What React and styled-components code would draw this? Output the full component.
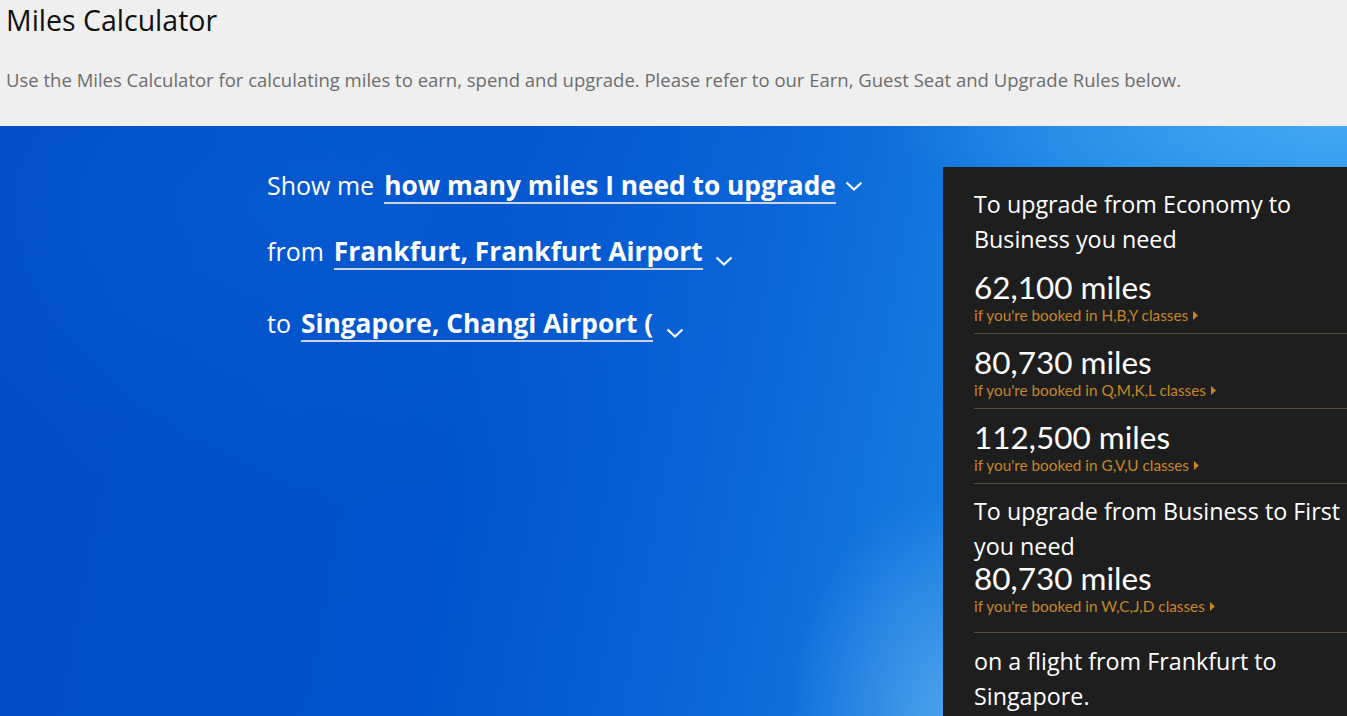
import styled, { createGlobalStyle } from "styled-components";

const GlobalStyle = createGlobalStyle`
  html, body {
    margin: 0;
    padding: 0;
    overflow: hidden;
  }
  body {
    font-family: "Open Sans", Lato, sans-serif;
  }
`;

const Page = styled.div`
  height: 100vh;
  display: flex;
  flex-direction: column;
  overflow: hidden;
`;

const Intro = styled.header`
  flex: none;
  background: #efefef;
  height: 126px;
  padding: 2px 6px 0;
  box-sizing: border-box;
`;

const Title = styled.h1`
  margin: 0;
  font-size: 28.5px;
  font-weight: 400;
  line-height: 36px;
  color: #111;
`;

const Lead = styled.p`
  margin: 30px 0 0;
  font-size: 18.5px;
  line-height: 24px;
  color: #6d6d6d;
`;

const Hero = styled.section`
  flex: 1;
  min-height: 0;
  display: flex;
  align-items: flex-start;
  padding-left: 267px;
  background:
    radial-gradient(ellipse 460px 110px at 100% 0%, rgba(70, 170, 245, 0.9), rgba(70, 170, 245, 0) 100%),
    radial-gradient(ellipse 160px 220px at 950px 100%, rgba(120, 190, 245, 0.55), rgba(120, 190, 245, 0) 100%),
    radial-gradient(ellipse 500px 300px at 300px 80px, rgba(20, 110, 220, 0.3), rgba(20, 110, 220, 0) 100%),
    linear-gradient(100deg, #004cc6 0%, #0052cc 35%, #0b66d8 55%, #1a82e2 75%, #2a95ec 100%);
`;

const Form = styled.div`
  flex: 1;
  display: flex;
  flex-direction: column;
  padding-top: 42px;
  gap: 22px;
  color: #fff;
`;

const Line = styled.div`
  display: flex;
  align-items: flex-start;
  height: ${(p) => p.$h}px;
  font-size: 25px;
`;

const Label = styled.span`
  line-height: 34px;
  margin-right: ${(p) => p.$gap}px;
`;

const Choice = styled.span`
  font-weight: 700;
  font-size: 26.3px;
  line-height: 34px;
  border-bottom: 2px solid #cfd3dc;
  white-space: nowrap;
`;

const Caret = styled.svg`
  width: 18px;
  height: 10px;
  margin-left: ${(p) => p.$left}px;
  margin-top: ${(p) => p.$top}px;
  flex: none;
`;

const Result = styled.aside`
  width: 404px;
  box-sizing: border-box;
  margin-top: 41px;
  align-self: stretch;
  background: #1e1e1e;
  padding: 20px 0 0 31px;
  color: #fff;
`;

const Heading = styled.p`
  margin: 0;
  padding-top: ${(p) => p.$top || 0}px;
  font-size: 23.3px;
  line-height: 35px;
`;

const Option = styled.div`
  margin-top: ${(p) => p.$shift || 0}px;
  padding: ${(p) => p.$top}px 0 ${(p) => p.$bottom}px;
  border-bottom: 1px solid #54493b;
`;

const Miles = styled.div`
  font-family: Lato, "Open Sans", sans-serif;
  font-size: 31.5px;
  line-height: 32px;
`;

const Booked = styled.a`
  display: flex;
  align-items: center;
  gap: 5px;
  margin-top: 3px;
  font-family: Lato, "Open Sans", sans-serif;
  font-size: 15.3px;
  line-height: 18px;
  color: #c68626;
  text-decoration: none;
  cursor: pointer;
`;

const Footer = styled.p`
  margin: 0;
  padding-top: 11px;
  font-size: 23.3px;
  line-height: 35px;
`;

const Chevron = ({ left, top }) => (
  <Caret viewBox="0 0 18 10" $left={left} $top={top}>
    <path d="M1.5 1.5 L9 8.5 L16.5 1.5" fill="none" stroke="#fff" strokeWidth="2.2" />
  </Caret>
);

const Arrow = () => (
  <svg width="5" height="9" viewBox="0 0 5 9">
    <path d="M0 0 L5 4.5 L0 9 Z" fill="#c68626" />
  </svg>
);

const economy = [
  { miles: "62,100", classes: "H,B,Y", top: 14 },
  { miles: "80,730", classes: "Q,M,K,L", top: 12 },
  { miles: "112,500", classes: "G,V,U", top: 12 },
];

function App() {
  return (
    <Page>
      <GlobalStyle />
      <Intro>
        <Title>Miles Calculator</Title>
        <Lead>
          Use the Miles Calculator for calculating miles to earn, spend and upgrade. Please refer to our
          Earn, Guest Seat and Upgrade Rules below.
        </Lead>
      </Intro>
      <Hero>
        <Form>
          <Line $h={44}>
            <Label $gap={10}>Show me</Label>
            <Choice>how many miles I need to upgrade</Choice>
            <Chevron left={9} top={13} />
          </Line>
          <Line $h={50}>
            <Label $gap={10}>from</Label>
            <Choice>Frankfurt, Frankfurt Airport</Choice>
            <Chevron left={12} top={22} />
          </Line>
          <Line $h={44}>
            <Label $gap={10}>to</Label>
            <Choice>Singapore, Changi Airport (</Choice>
            <Chevron left={13} top={22} />
          </Line>
        </Form>
        <Result>
          <Heading>To upgrade from Economy to Business you need</Heading>
          {economy.map((o) => (
            <Option key={o.classes} $top={o.top} $bottom={9}>
              <Miles>{o.miles} miles</Miles>
              <Booked>
                if you're booked in {o.classes} classes <Arrow />
              </Booked>
            </Option>
          ))}
          <Heading $top={10}>To upgrade from Business to First you need</Heading>
          <Option $shift={-4} $top={2} $bottom={17}>
            <Miles>80,730 miles</Miles>
            <Booked>
              if you're booked in W,C,J,D classes <Arrow />
            </Booked>
          </Option>
          <Footer>on a flight from Frankfurt to Singapore.</Footer>
        </Result>
      </Hero>
    </Page>
  );
}

export default App;
